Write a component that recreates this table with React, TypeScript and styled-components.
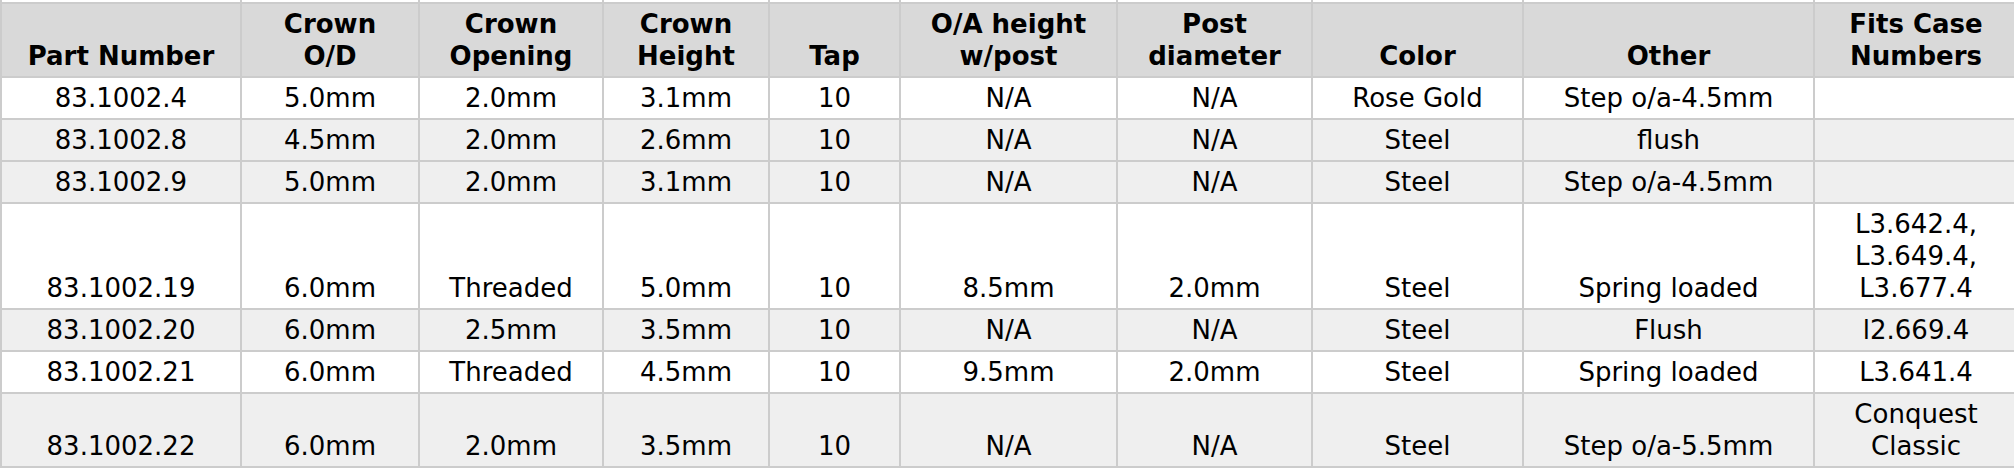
import styled, { createGlobalStyle } from "styled-components";

const GlobalStyle = createGlobalStyle`
  html, body {
    margin: 0;
    padding: 0;
    background: #ffffff;
    overflow: hidden;
  }
  body {
    font-family: "DejaVu Sans", Verdana, sans-serif;
    color: #000000;
  }
`;

const COLUMNS = "240px 178px 184px 166px 131px 217px 195px 211px 291px 204px";

const Table = styled.div`
  width: 2017px;
  display: flex;
  flex-direction: column;
`;

const Row = styled.div<{ $shade?: "head" | "gray" | "white" }>`
  display: grid;
  grid-template-columns: ${COLUMNS};
  border-bottom: 2px solid #cccccc;
  background: ${({ $shade }) =>
    $shade === "head" ? "#d9d9d9" : $shade === "gray" ? "#efefef" : "#ffffff"};
  font-weight: ${({ $shade }) => ($shade === "head" ? 700 : 400)};
`;

const LeadRow = styled.div`
  display: grid;
  grid-template-columns: ${COLUMNS};
  height: 2px;
  border-bottom: 2px solid #cccccc;
`;

const Cell = styled.div`
  border-left: 2px solid #cccccc;
  padding: 4px 4px;
  font-size: 26px;
  line-height: 32px;
  text-align: center;
  display: flex;
  flex-direction: column;
  justify-content: flex-end;
  white-space: pre-line;
`;

const LeadCell = styled.div`
  border-left: 2px solid #cccccc;
`;

const headers = [
  "Part Number",
  "Crown\nO/D",
  "Crown\nOpening",
  "Crown\nHeight",
  "Tap",
  "O/A height\nw/post",
  "Post\ndiameter",
  "Color",
  "Other",
  "Fits Case\nNumbers",
];

type Part = { cells: string[]; shade: "gray" | "white" };

const parts: Part[] = [
  {
    shade: "white",
    cells: ["83.1002.4", "5.0mm", "2.0mm", "3.1mm", "10", "N/A", "N/A", "Rose Gold", "Step o/a-4.5mm", ""],
  },
  {
    shade: "gray",
    cells: ["83.1002.8", "4.5mm", "2.0mm", "2.6mm", "10", "N/A", "N/A", "Steel", "flush", ""],
  },
  {
    shade: "gray",
    cells: ["83.1002.9", "5.0mm", "2.0mm", "3.1mm", "10", "N/A", "N/A", "Steel", "Step o/a-4.5mm", ""],
  },
  {
    shade: "white",
    cells: [
      "83.1002.19",
      "6.0mm",
      "Threaded",
      "5.0mm",
      "10",
      "8.5mm",
      "2.0mm",
      "Steel",
      "Spring loaded",
      "L3.642.4,\nL3.649.4,\nL3.677.4",
    ],
  },
  {
    shade: "gray",
    cells: ["83.1002.20", "6.0mm", "2.5mm", "3.5mm", "10", "N/A", "N/A", "Steel", "Flush", "l2.669.4"],
  },
  {
    shade: "white",
    cells: ["83.1002.21", "6.0mm", "Threaded", "4.5mm", "10", "9.5mm", "2.0mm", "Steel", "Spring loaded", "L3.641.4"],
  },
  {
    shade: "gray",
    cells: ["83.1002.22", "6.0mm", "2.0mm", "3.5mm", "10", "N/A", "N/A", "Steel", "Step o/a-5.5mm", "Conquest\nClassic"],
  },
];

const App = () => {
  return (
    <>
      <GlobalStyle />
      <Table>
        <LeadRow>
          {headers.map((h) => (
            <LeadCell key={h} />
          ))}
        </LeadRow>
        <Row $shade="head">
          {headers.map((h) => (
            <Cell key={h}>{h}</Cell>
          ))}
        </Row>
        {parts.map((p) => (
          <Row key={p.cells[0]} $shade={p.shade}>
            {p.cells.map((c, i) => (
              <Cell key={i}>{c}</Cell>
            ))}
          </Row>
        ))}
      </Table>
    </>
  );
};

export default App;
